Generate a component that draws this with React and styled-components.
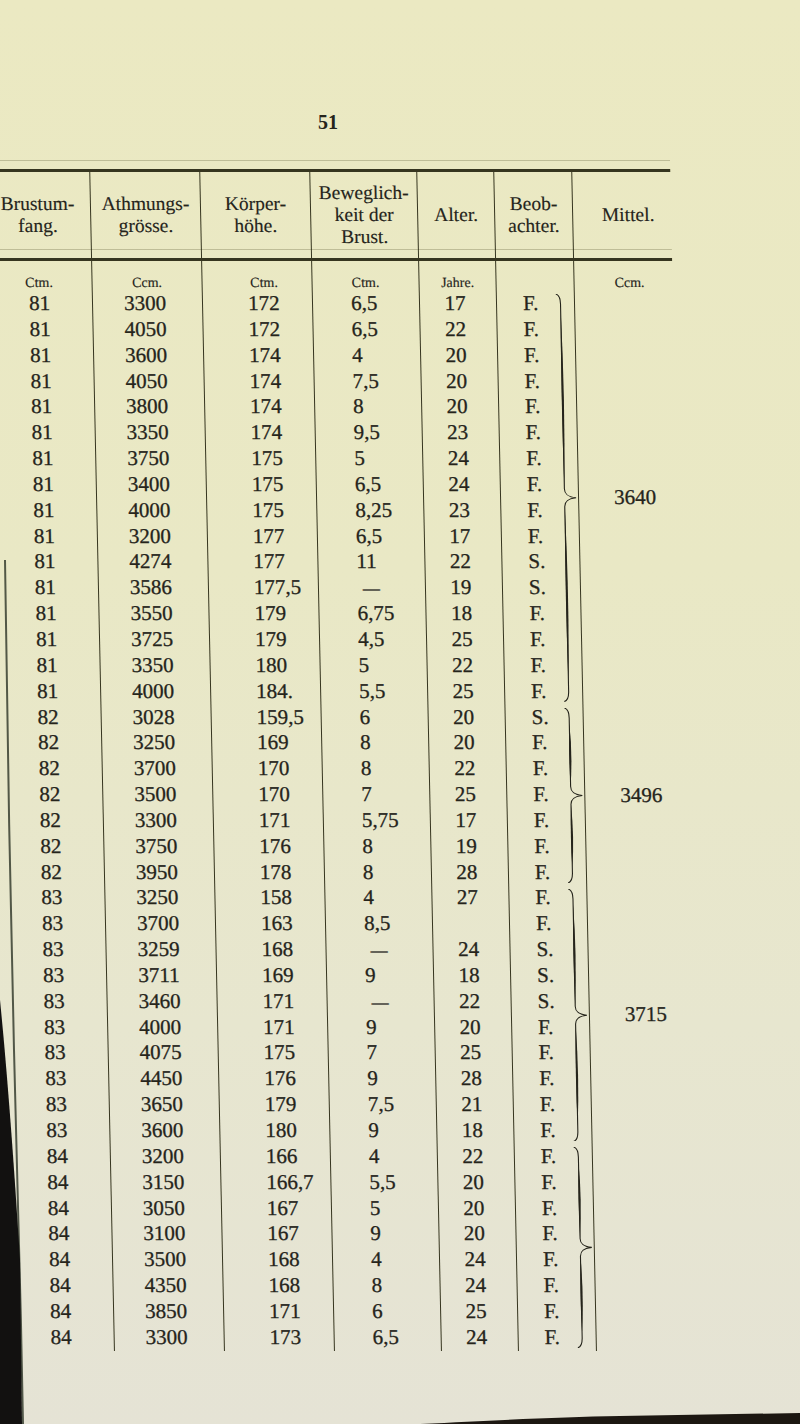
import React from 'react';
import styled, { createGlobalStyle } from 'styled-components';

const PITCH = 25.85;
const COLS = '108px 110px 110px 107px 77px 78px 98px';
const INK = '#25241b';
const LINE = '#36351f';

const rows = [
  ['81', '3300', '172', '6,5', '17', 'F.'],
  ['81', '4050', '172', '6,5', '22', 'F.'],
  ['81', '3600', '174', '4', '20', 'F.'],
  ['81', '4050', '174', '7,5', '20', 'F.'],
  ['81', '3800', '174', '8', '20', 'F.'],
  ['81', '3350', '174', '9,5', '23', 'F.'],
  ['81', '3750', '175', '5', '24', 'F.'],
  ['81', '3400', '175', '6,5', '24', 'F.'],
  ['81', '4000', '175', '8,25', '23', 'F.'],
  ['81', '3200', '177', '6,5', '17', 'F.'],
  ['81', '4274', '177', '11', '22', 'S.'],
  ['81', '3586', '177,5', '—', '19', 'S.'],
  ['81', '3550', '179', '6,75', '18', 'F.'],
  ['81', '3725', '179', '4,5', '25', 'F.'],
  ['81', '3350', '180', '5', '22', 'F.'],
  ['81', '4000', '184.', '5,5', '25', 'F.'],
  ['82', '3028', '159,5', '6', '20', 'S.'],
  ['82', '3250', '169', '8', '20', 'F.'],
  ['82', '3700', '170', '8', '22', 'F.'],
  ['82', '3500', '170', '7', '25', 'F.'],
  ['82', '3300', '171', '5,75', '17', 'F.'],
  ['82', '3750', '176', '8', '19', 'F.'],
  ['82', '3950', '178', '8', '28', 'F.'],
  ['83', '3250', '158', '4', '27', 'F.'],
  ['83', '3700', '163', '8,5', '', 'F.'],
  ['83', '3259', '168', '—', '24', 'S.'],
  ['83', '3711', '169', '9', '18', 'S.'],
  ['83', '3460', '171', '—', '22', 'S.'],
  ['83', '4000', '171', '9', '20', 'F.'],
  ['83', '4075', '175', '7', '25', 'F.'],
  ['83', '4450', '176', '9', '28', 'F.'],
  ['83', '3650', '179', '7,5', '21', 'F.'],
  ['83', '3600', '180', '9', '18', 'F.'],
  ['84', '3200', '166', '4', '22', 'F.'],
  ['84', '3150', '166,7', '5,5', '20', 'F.'],
  ['84', '3050', '167', '5', '20', 'F.'],
  ['84', '3100', '167', '9', '20', 'F.'],
  ['84', '3500', '168', '4', '24', 'F.'],
  ['84', '4350', '168', '8', '24', 'F.'],
  ['84', '3850', '171', '6', '25', 'F.'],
  ['84', '3300', '173', '6,5', '24', 'F.'],
];

const groups = [
  { n: 16, value: '3640' },
  { n: 7, value: '3496' },
  { n: 10, value: '3715' },
  { n: 8, value: '' },
];

// plain numeric columns: alignment and offsets
const numCols = [
  { align: 'center', pl: 2 },
  { align: 'center', pr: 5 },
  { align: 'left', pl: 45 },
  { align: 'left', pl: 38 },
  { align: 'center', pr: 6 },
];

const GlobalStyle = createGlobalStyle`
  html, body { margin: 0; padding: 0; }
  body { background: #e8e6c8; }
`;

const Page = styled.div`
  position: relative;
  width: 800px;
  height: 1424px;
  overflow: hidden;
  background: linear-gradient(180deg, #ebe9c2 0%, #e9e8c5 40%, #e7e6cf 72%, #e5e3d5 100%);
  font-family: "Liberation Serif", "Times New Roman", serif;
  color: ${INK};
`;

const PageNumber = styled.div`
  padding: 112px 0 0 318px;
  height: 20px;
  font-size: 20px;
  line-height: 20px;
  font-weight: bold;
`;

const Table = styled.div`
  margin: 28px 0 0 -18px;
  width: 688px;
  transform: skewX(1.2deg);
  transform-origin: 0 0;
`;

const TopRule = styled.div`
  height: 8px;
  border-top: 1px solid rgba(110, 108, 70, 0.35);
  border-bottom: 3px solid ${LINE};
`;

const HeaderRow = styled.div`
  display: grid;
  grid-template-columns: ${COLS};
  height: 86px;
  border-bottom: 3px solid ${LINE};
  background: linear-gradient(
    to top,
    transparent 8px,
    rgba(110, 108, 70, 0.35) 8px,
    rgba(110, 108, 70, 0.35) 9px,
    transparent 9px
  );
`;

const HeadCell = styled.div`
  display: flex;
  align-items: center;
  justify-content: center;
  text-align: center;
  font-size: 19.5px;
  line-height: 22px;
  padding-left: ${p => p.$pl || 0}px;
  -webkit-text-stroke: 0.15px ${INK};
  border-right: ${p => (p.$last ? 'none' : `1.5px solid ${LINE}`)};
`;

const UnitsRow = styled.div`
  display: grid;
  grid-template-columns: ${COLS};
  height: 30px;
`;

const UnitCell = styled.div`
  display: flex;
  align-items: flex-end;
  justify-content: center;
  font-size: 14px;
  line-height: 16px;
  padding-left: ${p => p.$pl || 0}px;
  -webkit-text-stroke: 0.15px ${INK};
  border-right: ${p => (p.$last ? 'none' : `1.5px solid ${LINE}`)};
`;

const Body = styled.div`
  display: grid;
  grid-template-columns: ${COLS};
`;

const Column = styled.div`
  display: flex;
  flex-direction: ${p => (p.$split ? 'row' : 'column')};
  border-right: ${p => (p.$last ? 'none' : `1.5px solid ${LINE}`)};
`;

const Stack = styled.div`
  display: flex;
  flex-direction: column;
  width: ${p => p.$w}px;
  padding-left: ${p => p.$pl || 0}px;
`;

const Cell = styled.div`
  height: ${PITCH}px;
  line-height: ${PITCH}px;
  font-size: 21px;
  white-space: nowrap;
  text-align: ${p => p.$align || 'left'};
  padding-left: ${p => p.$pl || 0}px;
  padding-right: ${p => p.$pr || 0}px;
  -webkit-text-stroke: 0.3px ${INK};
`;

const Dash = styled.span`
  display: inline-block;
  margin-left: 6px;
  font-size: 17px;
`;

const Group = styled.div`
  height: ${p => p.$n * PITCH}px;
  display: flex;
  align-items: center;
  justify-content: center;
  padding-left: ${p => p.$pl || 0}px;
  font-size: 21px;
  -webkit-text-stroke: 0.3px ${INK};
`;

const Edges = styled.svg`
  position: absolute;
  left: 0;
  top: 0;
  pointer-events: none;
`;

function Brace({ n }) {
  const H = n * PITCH - 6;
  const h = H / 2;
  const a1 = 10;
  const a2 = h - 9;
  const b1 = h + 9;
  const b2 = H - 10;
  const m1 = (a1 + a2) / 2;
  const m2 = (b1 + b2) / 2;
  const d = `M2 0 C5 1 6.5 4 6.5 ${a1} L6.5 ${a2} C6.5 ${h - 4} 9 ${h - 1} 18 ${h} C9 ${h + 1} 6.5 ${h + 4} 6.5 ${b1} L6.5 ${b2} C6.5 ${H - 4} 5 ${H - 1} 2 ${H}`;
  return (
    <svg width="20" height={H} viewBox={`0 0 20 ${H}`} style={{ margin: '3px 0', display: 'block' }}>
      <path d={d} fill="none" stroke={INK} strokeWidth="1.1" />
      <path d={`M6.5 ${a1 + 6} Q9.3 ${m1} 6.5 ${a2} Q4.9 ${m1} 6.5 ${a1 + 6} Z`} fill={INK} />
      <path d={`M6.5 ${b1} Q9.3 ${m2} 6.5 ${b2 - 6} Q4.9 ${m2} 6.5 ${b1} Z`} fill={INK} />
    </svg>
  );
}

function renderValue(v) {
  if (v === '—') return <Dash>—</Dash>;
  return v;
}

export default function App() {
  return (
    <Page>
      <GlobalStyle />
      <PageNumber>51</PageNumber>
      <Table>
        <TopRule />
        <HeaderRow>
          <HeadCell $pl={2}>Brustum-<br />fang.</HeadCell>
          <HeadCell>Athmungs-<br />grösse.</HeadCell>
          <HeadCell>Körper-<br />höhe.</HeadCell>
          <HeadCell>Beweglich-<br />keit der<br />Brust.</HeadCell>
          <HeadCell>Alter.</HeadCell>
          <HeadCell>Beob-<br />achter.</HeadCell>
          <HeadCell $last $pl={12}>Mittel.</HeadCell>
        </HeaderRow>
        <UnitsRow>
          <UnitCell $pl={2}>Ctm.</UnitCell>
          <UnitCell>Ccm.</UnitCell>
          <UnitCell $pl={14}>Ctm.</UnitCell>
          <UnitCell>Ctm.</UnitCell>
          <UnitCell>Jahre.</UnitCell>
          <UnitCell />
          <UnitCell $last $pl={12}>Ccm.</UnitCell>
        </UnitsRow>
        <Body>
          {numCols.map((c, i) => (
            <Column key={i}>
              {rows.map((r, j) => (
                <Cell key={j} $align={c.align} $pl={c.pl} $pr={c.pr}>
                  {renderValue(r[i])}
                </Cell>
              ))}
            </Column>
          ))}
          <Column $split>
            <Stack $w={50} $pl={26}>
              {rows.map((r, j) => (
                <Cell key={j}>{r[5]}</Cell>
              ))}
            </Stack>
            <Stack $w={20}>
              {groups.map((g, k) => (
                <Brace key={k} n={g.n} />
              ))}
            </Stack>
          </Column>
          <Column $last>
            {groups.map((g, k) => (
              <Group key={k} $n={g.n} $pl={14}>{g.value}</Group>
            ))}
          </Column>
        </Body>
      </Table>
      <Edges width="800" height="1424" viewBox="0 0 800 1424">
        <path d="M5 560 C7 700 10 900 14 1050 C17 1180 21 1300 23 1424" fill="none" stroke="#2c3326" strokeWidth="2" opacity="0.8" />
        <path d="M0 1000 C8 1080 15 1180 20 1260 L22 1424 L0 1424 Z" fill="#121110" />
        <path d="M420 1424 C500 1420 560 1417 620 1416 L800 1413 L800 1424 Z" fill="#1c1711" />
      </Edges>
    </Page>
  );
}
